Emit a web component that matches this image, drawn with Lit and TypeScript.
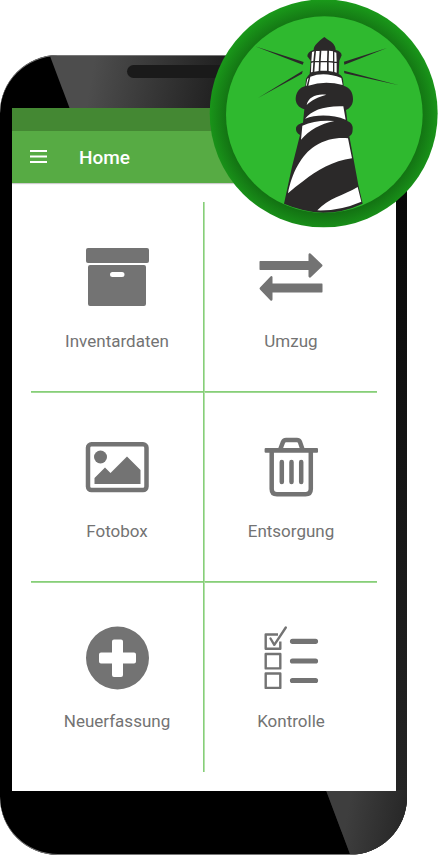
import { LitElement, html, css, svg } from "lit";
import { customElement, property } from "lit/decorators.js";

const icons: Record<string, unknown> = {
  archive: svg`<rect x="1" y="2" width="63" height="15" rx="2"/>
    <path fill-rule="evenodd" d="M5 19H59Q61 19 61 21V58Q61 60 59 60H5Q3 60 3 58V21Q3 19 5 19ZM27.500 26A2.500 2.500 0 0 0 27.500 31H37A2.500 2.500 0 0 0 37 26Z"/>`,
  move: svg`<path d="M1 15H49.500V8.500Q50 6.500 51.500 7.500L63 18.500Q64 19.500 63 20.500L51.500 31.500Q50 32 49.500 30.500V24H1Q.500 24 .500 23V16Q.500 15 1 15Z"/>
    <path d="M63 37.500H13.500V31Q13 29.500 11.500 30.500L1 41.500Q0 42.500 1 43.500L11.500 54.500Q13 55.500 13.500 53.500V46.500H63Q63.500 46.500 63.500 45.500V38.500Q63.500 37.500 63 37.500Z"/>`,
  photo: svg`<rect x="3" y="8.300" width="58.500" height="45.800" rx="3.500" fill="none" stroke="currentColor" stroke-width="4.500"/>
    <circle cx="15.500" cy="21" r="6.500"/><path d="M9.500 48V42L20 31.500L25.500 37L42 20.500L55.500 34V48Z"/>`,
  trash: svg`<g fill="none" stroke="currentColor" stroke-width="4.500">
    <path d="M12.700 14.500V53Q12.700 58.300 18 58.300H46.500Q51.800 58.300 51.800 53V14.500"/>
    <path d="M21 14L24 6Q25 4 27 4H38Q40 4 41 6L43.700 14"/>
    <path d="M22.800 26V46M32.500 26V46M42.200 26V46" stroke-linecap="round"/></g>
    <rect x="5.600" y="12" width="53.400" height="4.800" rx="1"/>`,
  add: svg`<path fill-rule="evenodd" d="M32.500 .500A31.500 31.500 0 1 1 32.500 63.500A31.500 31.500 0 1 1 32.500 .500ZM29 13.500Q27 13.500 27 15.500V26.500H16Q14 26.500 14 28.500V35.500Q14 37.500 16 37.500H27V49Q27 51 29 51H36Q38 51 38 49V37.500H49Q51 37.500 51 35.500V28.500Q51 26.500 49 26.500H38V15.500Q38 13.500 36 13.500Z"/>`,
  checklist: svg`<g fill="none" stroke="currentColor" stroke-width="2.400" stroke-linejoin="round">
    <path d="M19 8.500H6.700V22.700H21.300V15.500"/><rect x="6.700" y="28" width="14.600" height="14.400"/><rect x="6.700" y="47.500" width="14.600" height="14.400"/>
    <path d="M11.500 12.500L15.300 18.800L26.800 1.500" stroke-linecap="round"/></g>
    <path d="M33.500 15.300H56.500M33.500 35H56.500M33.500 54.500H56.500" stroke="currentColor" stroke-width="5.200" stroke-linecap="round"/>`,
};

const entries = [
  { icon: "archive", label: "Inventardaten" },
  { icon: "move", label: "Umzug" },
  { icon: "photo", label: "Fotobox" },
  { icon: "trash", label: "Entsorgung" },
  { icon: "add", label: "Neuerfassung" },
  { icon: "checklist", label: "Kontrolle" },
];

@customElement("menu-tile")
export class MenuTile extends LitElement {
  @property() icon = "";
  @property() label = "";

  static styles = css`
    :host { display: block; }
    .tile {
      display: flex; flex-direction: column; align-items: center; gap: 19px;
      width: 100%; height: 100%; padding: 44px 0 0; border: 0;
      background: none; color: #737373; cursor: pointer;
      font: 400 17px/24px Roboto, sans-serif;
    }
    .icon { width: 64px; height: 64px; fill: currentColor; }
  `;

  render() {
    return html`<button class="tile" type="button">
      <svg class="icon" viewBox="0 0 64 64" overflow="visible" aria-hidden="true">${icons[this.icon]}</svg>
      <span>${this.label}</span>
    </button>`;
  }
}

@customElement("lighthouse-badge")
export class LighthouseBadge extends LitElement {
  static styles = css`
    :host { display: block; }
    .badge { display: block; width: 100%; }
  `;

  render() {
    return html`<svg class="badge" viewBox="27 0 687 684" role="img" aria-label="Leuchtturm">
      <defs>
        <radialGradient id="ring" gradientUnits="userSpaceOnUse" cx="372" cy="350" r="350">
          <stop offset="0.820" stop-color="#127012"/>
          <stop offset="0.900" stop-color="#168216"/>
          <stop offset="1" stop-color="#1a991a"/>
        </radialGradient>
      </defs>
      <circle cx="371" cy="340" r="342" fill="url(#ring)"/>
      <circle cx="373" cy="344" r="295" fill="#2fb92f"/>
      <g fill="#2b2929">
        <path d="M165 139L311 186L308 194Z"/>
        <path d="M561 144L432 185L433 194Z"/>
        <path d="M174 294L308 212L306 221Z"/>
        <path d="M597 256L432 212L433 220Z"/>
        <path d="M373 111L382 118C398 127 407 137 407 150Q424 154 425 166L418 182L416 222Q428 228 429 238L431 257C448 262 459 275 459 297C459 315 450 325 438 330L442 363C455 368 459 378 458 388C458 400 454 406 448 409L475 555L488 611Q430 638 370 638Q310 636 252 611L276 500L300 405C290 400 287 392 288 384C290 375 300 370 309 368L313 328C295 322 287 310 287 296C288 275 300 262 316 258L318 236Q321 230 329 222L332 182L322 169Q322 155 341 150C341 137 355 126 364 118Z"/>
      </g>
      <g fill="#fff">
        <path d="M336 156L343 154L340 183L334 184ZM348 153H359L357 183H345ZM364 152H382L381 183H362ZM387 152L399 154V184L386 183ZM403 156L409 158L410 185H403Z"/>
        <path d="M334 189L340 187L338 216L333 217ZM345 187H357L356 213L343 215ZM362 187H381V212H361ZM386 187L399 188V215L386 213ZM403 189H410V218L403 216Z"/>
        <path d="M331 230Q373 214 424 234L428 255Q375 240 325 257ZM322 236L326 234L320 257H318Z"/>
        <path d="M320 315C325 290 350 280 379 284C353 291 335 300 320 315Z"/>
        <path d="M315 356C335 332 370 317 430 319L437 359C400 344 350 342 315 356Z"/>
        <path d="M307 377Q350 358 403 363C360 372 329 390 303 419Z"/>
        <path d="M264 580C275 520 304 464 345 438C378 418 410 412 444 415L456 475C400 482 350 512 310 543Q286 560 264 580Z"/>
        <path d="M352 631C385 595 430 586 473 561L484 605Q420 633 352 631Z"/>
      </g>
    </svg>`;
  }
}

@customElement("app-root")
export class AppRoot extends LitElement {
  static styles = css`
    :host {
      display: flow-root; position: relative; background: #fff;
      font-family: Roboto, sans-serif;
    }
    .phone {
      position: relative; box-sizing: border-box; overflow: hidden;
      margin: 55px 31px 0 0; padding: 0 11px 64px 12px;
      border-radius: 58px; background: #000;
      box-shadow: inset 0 1px 0 #777, inset 0 -1px 0 #777;
    }
    .sheen {
      position: absolute; inset: 1px 0;
      clip-path: polygon(50px 0, 100% 0, 100% 100%, 350px 100%);
      background:
        linear-gradient(100deg, #4d4d4d 22%, #1c1c1c 55%, #080808 100%) top / 100% 140px no-repeat,
        linear-gradient(100deg, #3e3e3e 84%, #242424 100%) bottom / 100% 64px no-repeat,
        linear-gradient(#080808 140px, #242424 736px);
    }
    .bezel { position: relative; box-sizing: border-box; height: 53px; padding-top: 10px; }
    .speaker { width: 40%; height: 13px; margin: 0 auto; border-radius: 7px; background: #1a1a1a; }
    .screen { position: relative; overflow: hidden; background: #fff; }
    .status { height: 23px; background: #448833; }
    .bar {
      display: flex; align-items: center; gap: 32px; height: 52px; padding-left: 17px;
      background: #57ab44; color: #fff; box-shadow: 0 1px 1px #ccc;
    }
    .menu { display: flex; padding: 0; border: 0; background: none; color: inherit; cursor: pointer; }
    .menu-icon { width: 18px; height: 18px; }
    .title { margin: 0; padding-top: 2px; font-size: 19px; line-height: 24px; font-weight: 500; }
    .grid {
      display: grid; grid-template-columns: 1fr 1fr; grid-auto-rows: 190px;
      padding: 19px;
    }
    .cell { box-sizing: border-box; }
    .cell:nth-child(odd) { border-right: 1px solid #86cf78; }
    .cell:nth-child(even) { border-left: 1px solid #b4e0ab; }
    .cell:nth-child(-n + 4) { border-bottom: 1px solid #86cf78; box-shadow: 0 1px 0 #a0d894; }
    .logo { position: absolute; top: 0; right: 0; width: 229px; }
  `;

  render() {
    return html`
      <main class="phone">
        <div class="sheen"></div>
        <div class="bezel"><div class="speaker"></div></div>
        <div class="screen">
          <div class="status"></div>
          <header class="bar">
            <button class="menu" type="button" aria-label="Menü">
              <svg class="menu-icon" viewBox="0 0 18 18" aria-hidden="true">
                <path d="M1 3H18M1 8.500H18M1 14H18" stroke="currentColor" stroke-width="2"/>
              </svg>
            </button>
            <h1 class="title">Home</h1>
          </header>
          <nav class="grid">
            ${entries.map((e) => html`<menu-tile class="cell" icon=${e.icon} label=${e.label}></menu-tile>`)}
          </nav>
        </div>
      </main>
      <lighthouse-badge class="logo"></lighthouse-badge>
    `;
  }
}
